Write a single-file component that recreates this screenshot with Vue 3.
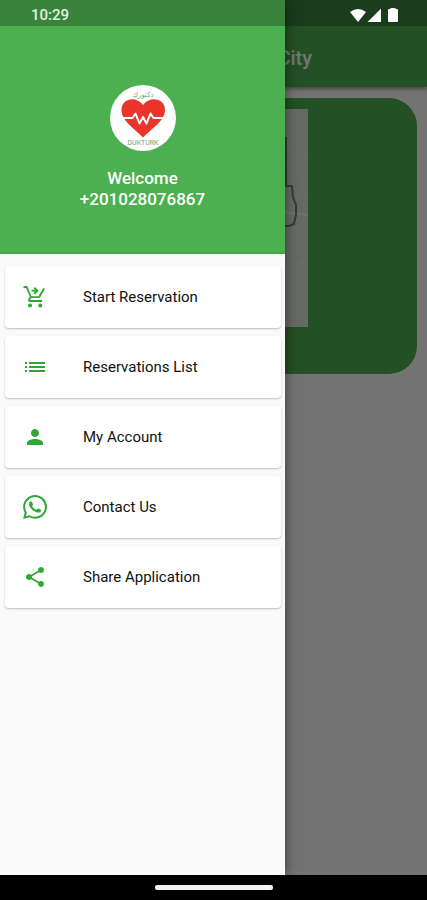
<script setup>
const items = [
  { id: 'start', label: 'Start Reservation' },
  { id: 'list', label: 'Reservations List' },
  { id: 'account', label: 'My Account' },
  { id: 'contact', label: 'Contact Us' },
  { id: 'share', label: 'Share Application' },
]

const paths = {
  start:
    'M8.500 4.800h3.500L10.500 3.300 11.900 1.900l3.900 3.800-3.900 3.800-1.400-1.400 1.500-1.500H8.500zM7 18.500c-1.100 0-2 .9-2 2s.9 2 2 2 2-.9 2-2-.9-2-2-2zm10.300 0c-1.100 0-2 .9-2 2s.9 2 2 2 2-.9 2-2-.9-2-2-2zM15.500 13c.750 0 1.410-.410 1.750-1.030L21.900 3.900 20.200 2.900l-4.700 8.300H8.500L4.300 1H.500v1.900h2.600l3.700 8.700-1.400 2.400C4.500 15.400 5.500 17 7 17h12v-1.900H7l1.100-2.100z',
  list:
    'M2 17h2v-2H2zm0-4h2v-2H2zm0-4h2V7H2zm4 8h16v-2H6zm0-4h16v-2H6zm0-6v2h16V7z',
  account:
    'M12 12c2.210 0 4-1.790 4-4s-1.790-4-4-4-4 1.790-4 4 1.790 4 4 4zm0 2c-2.670 0-8 1.340-8 4v2h16v-2c0-2.660-5.330-4-8-4z',
  contact:
    'M17.472 14.382c-.297-.149-1.758-.867-2.030-.967-.273-.099-.471-.148-.670.150-.197.297-.767.966-.940 1.164-.173.199-.347.223-.644.075-.297-.150-1.255-.463-2.390-1.475-.883-.788-1.480-1.761-1.653-2.059-.173-.297-.018-.458.130-.606.134-.133.298-.347.446-.520.149-.174.198-.298.298-.497.099-.198.050-.371-.025-.520-.075-.149-.669-1.612-.916-2.207-.242-.579-.487-.500-.669-.510-.173-.008-.371-.010-.570-.010-.198 0-.520.074-.792.372-.272.297-1.040 1.016-1.040 2.479 0 1.462 1.065 2.875 1.213 3.074.149.198 2.096 3.200 5.077 4.487.709.306 1.262.489 1.694.625.712.227 1.360.195 1.871.118.571-.085 1.758-.719 2.006-1.413.248-.694.248-1.289.173-1.413-.074-.124-.272-.198-.570-.347m-5.421 7.403h-.004a9.870 9.870 0 0 1-5.031-1.378l-.361-.214-3.741.982.998-3.648-.235-.374a9.860 9.860 0 0 1-1.510-5.260c.001-5.450 4.436-9.884 9.888-9.884 2.640 0 5.122 1.030 6.988 2.898a9.825 9.825 0 0 1 2.893 6.994c-.003 5.450-4.437 9.884-9.885 9.884m8.413-18.297A11.815 11.815 0 0 0 12.050 0C5.495 0 .160 5.335.157 11.892c0 2.096.547 4.142 1.588 5.945L.057 24l6.305-1.654a11.882 11.882 0 0 0 5.683 1.448h.005c6.554 0 11.890-5.335 11.893-11.893a11.821 11.821 0 0 0-3.480-8.413z',
  share:
    'M18 16.080c-.760 0-1.440.300-1.960.770L8.910 12.700c.050-.230.090-.460.090-.700s-.040-.470-.090-.700l7.050-4.110c.540.500 1.250.810 2.040.810 1.660 0 3-1.340 3-3s-1.340-3-3-3-3 1.340-3 3c0 .240.040.470.090.700L8.040 9.810C7.500 9.310 6.790 9 6 9c-1.660 0-3 1.340-3 3s1.340 3 3 3c.790 0 1.500-.310 2.040-.810l7.120 4.160c-.050.210-.080.430-.080.650 0 1.610 1.310 2.920 2.920 2.920s2.920-1.310 2.920-2.920-1.310-2.920-2.920-2.920z',
}
</script>

<template>
  <div class="phone">
    <div class="screen">
      <header class="appbar">
        <h1 class="title">City</h1>
      </header>
      <main class="content">
        <div class="city-card">
          <svg class="map" viewBox="0 0 188 218" preserveAspectRatio="none" aria-hidden="true">
            <rect width="188" height="218" fill="#dce6dc" />
            <path d="M150 62q18-6 24-4t14-14M160 20q12 20 28 70M165 150q14 5 20 4M150 180l38-30" fill="none" stroke="#e8eee8" stroke-width="1" />
            <path d="M150 102l38 4" stroke="#f6f8f6" stroke-width="2" />
            <path d="M166 28v49h6l1 11 3 8v10l-2 9-5 2h-8" fill="none" stroke="#7e7888" stroke-width="2" />
          </svg>
        </div>
      </main>
      <div class="scrim"></div>
      <aside class="drawer">
        <div class="profile">
          <svg class="logo" viewBox="0 0 66 66" role="img" aria-label="Dukturk">
            <circle cx="33" cy="33" r="33" fill="#fff" />
            <path d="M33 52.500C25 44 11.500 36 11.500 25 11.500 12.500 27 11 33 20 39 11 55 12.500 55 25 55 36 41 44 33 52.500z" fill="#e9352c" />
            <path d="M10 33H22.500L25.500 28.500 29.500 38.500 33 32 36.500 38.500 40.500 28.500 43.500 33H56" fill="none" stroke="#fff" stroke-width="2" stroke-linejoin="round" />
            <text class="logo-text logo-ar" x="33" y="12" text-anchor="middle">دكتورك</text>
            <text class="logo-text" x="33" y="60" text-anchor="middle">DUKTURK</text>
          </svg>
          <p class="welcome">Welcome<br />+201028076867</p>
        </div>
        <nav class="menu" aria-label="Main">
          <button v-for="item in items" :key="item.id" type="button" class="item">
            <svg class="icon" viewBox="0 0 24 24" aria-hidden="true">
              <path :d="paths[item.id]" />
            </svg>
            <span>{{ item.label }}</span>
          </button>
        </nav>
      </aside>
      <div class="status">
        <span>10:29</span>
        <svg class="signals" viewBox="0 0 50 16" aria-hidden="true">
          <path d="M1 5Q9-1 17 5L9 15z M18.500 15L32 1.500V15z M39 3q0-1 1-1h1.500V1h5v1H48q1 0 1 1v11q0 1-1 1h-8q-1 0-1-1z" />
        </svg>
      </div>
    </div>
    <footer class="navbar"><span class="handle"></span></footer>
  </div>
</template>

<style>
body {
  margin: 0;
}
</style>

<style scoped>
.phone {
  display: flex;
  flex-direction: column;
  min-height: 100vh;
  font-family: Roboto, "Liberation Sans", sans-serif;
}
.screen {
  position: relative;
  flex: 1;
  display: flex;
  flex-direction: column;
  overflow: hidden;
  background: #fafafa;
}
.appbar {
  padding: 46px 115px 17px 16px;
  background: #4caf50;
  box-shadow: 0 2px 4px rgba(0, 0, 0, 0.4);
}
.title {
  margin: 0;
  font-size: 20px;
  line-height: 24px;
  font-weight: 500;
  text-align: right;
  color: #fff;
}
.content {
  padding: 11px 10px;
}
.city-card {
  display: flex;
  justify-content: center;
  padding: 11px 11px 47px;
  border-radius: 28px;
  background: #4caf50;
}
.map {
  width: 188px;
  height: 218px;
}
.scrim {
  position: absolute;
  inset: 0;
  background: rgba(0, 0, 0, 0.54);
}
.drawer {
  position: absolute;
  top: 0;
  bottom: 0;
  left: 0;
  width: 285px;
  max-width: 80%;
  background: #fafafa;
  box-shadow: 0 0 12px rgba(0, 0, 0, 0.5);
}
.profile {
  display: flex;
  flex-direction: column;
  align-items: center;
  gap: 17px;
  padding: 85px 16px 42px;
  border-bottom: 2px solid #43a648;
  background: #4caf50;
}
.logo {
  width: 66px;
  height: 66px;
}
.logo-text {
  font-family: Roboto, sans-serif;
  font-size: 7px;
  fill: #6fa672;
}
.logo-ar {
  font-family: "DejaVu Sans", sans-serif;
}
.welcome {
  margin: 0;
  font-size: 17px;
  line-height: 21px;
  font-weight: 500;
  text-align: center;
  color: #fff;
}
.menu {
  display: grid;
  grid-auto-rows: 1fr;
  gap: 8px;
  padding: 12px 4px 0 5px;
}
.item {
  display: flex;
  align-items: center;
  gap: 36px;
  min-height: 62px;
  padding: 0 18px;
  border: 0;
  border-radius: 4px;
  background: #fff;
  box-shadow: 0 1px 2px rgba(0, 0, 0, 0.25);
  font-family: inherit;
  font-size: 15px;
  line-height: 20px;
  color: #111;
  text-align: left;
}
.icon {
  width: 24px;
  height: 24px;
  fill: #2ea836;
}
.status {
  position: absolute;
  top: 0;
  left: 0;
  right: 0;
  display: flex;
  align-items: center;
  justify-content: space-between;
  padding: 5px 28px 1px 31px;
  background: rgba(0, 0, 0, 0.25);
  font-size: 15px;
  font-weight: 500;
  line-height: 20px;
  color: #e2f0e2;
}
.signals {
  width: 50px;
  height: 16px;
  fill: #fff;
}
.navbar {
  display: flex;
  align-items: center;
  justify-content: center;
  height: 25px;
  background: #000;
}
.handle {
  width: 118px;
  height: 5px;
  border-radius: 2px;
  background: #f2f2f2;
}
</style>
